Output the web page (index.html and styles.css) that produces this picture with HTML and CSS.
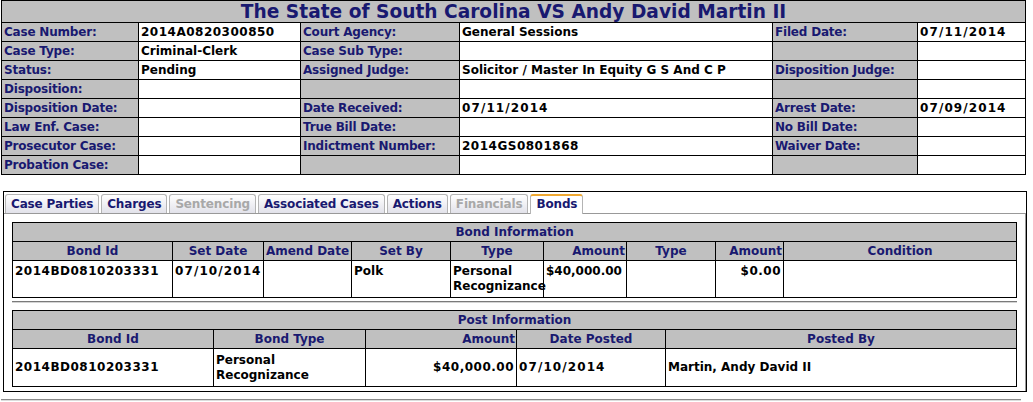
FILE: index.html
```html
<!DOCTYPE html>
<html lang="en">
<head>
<meta charset="UTF-8" />
<title>Case Details</title>
<link rel="stylesheet" href="styles.css">
</head>
<body>

<!-- Case header -->
<table class="case-info">
  <colgroup>
    <col style="width:137px"><col style="width:162px"><col style="width:159px">
    <col style="width:313px"><col style="width:145px"><col style="width:108px">
  </colgroup>
  <tr><th colspan="6" class="case-title">The State of South Carolina VS Andy David Martin II</th></tr>
  <tr>
    <td class="lbl">Case Number:</td><td class="code">2014A0820300850</td>
    <td class="lbl">Court Agency:</td><td>General Sessions</td>
    <td class="lbl">Filed Date:</td><td class="date">07/11/2014</td>
  </tr>
  <tr>
    <td class="lbl">Case Type:</td><td>Criminal-Clerk</td>
    <td class="lbl">Case Sub Type:</td><td></td>
    <td class="lbl"></td><td></td>
  </tr>
  <tr>
    <td class="lbl">Status:</td><td>Pending</td>
    <td class="lbl">Assigned Judge:</td><td>Solicitor / Master In Equity G S And C P</td>
    <td class="lbl">Disposition Judge:</td><td></td>
  </tr>
  <tr>
    <td class="lbl">Disposition:</td><td></td>
    <td class="lbl"></td><td></td>
    <td class="lbl"></td><td></td>
  </tr>
  <tr>
    <td class="lbl">Disposition Date:</td><td></td>
    <td class="lbl">Date Received:</td><td class="date">07/11/2014</td>
    <td class="lbl">Arrest Date:</td><td class="date">07/09/2014</td>
  </tr>
  <tr>
    <td class="lbl">Law Enf. Case:</td><td></td>
    <td class="lbl">True Bill Date:</td><td></td>
    <td class="lbl">No Bill Date:</td><td></td>
  </tr>
  <tr>
    <td class="lbl">Prosecutor Case:</td><td></td>
    <td class="lbl">Indictment Number:</td><td class="code">2014GS0801868</td>
    <td class="lbl">Waiver Date:</td><td></td>
  </tr>
  <tr>
    <td class="lbl">Probation Case:</td><td></td>
    <td class="lbl"></td><td></td>
    <td class="lbl"></td><td></td>
  </tr>
</table>

<!-- Tabs -->
<div class="tab-box">
  <ul class="tabs">
    <li class="tab">Case Parties</li>
    <li class="tab">Charges</li>
    <li class="tab disabled">Sentencing</li>
    <li class="tab">Associated Cases</li>
    <li class="tab">Actions</li>
    <li class="tab disabled">Financials</li>
    <li class="tab active">Bonds</li>
  </ul>

  <div class="tab-panel">
    <table class="grid bond-info">
      <colgroup>
        <col style="width:160px"><col style="width:91px"><col style="width:88px">
        <col style="width:99px"><col style="width:93px"><col style="width:83px">
        <col style="width:89px"><col style="width:68px"><col style="width:233px">
      </colgroup>
      <tr><th colspan="9" class="grid-title">Bond Information</th></tr>
      <tr>
        <th>Bond Id</th><th>Set Date</th><th>Amend Date</th><th>Set By</th><th>Type</th>
        <th class="num">Amount</th><th>Type</th><th class="num">Amount</th><th>Condition</th>
      </tr>
      <tr class="data-top">
        <td class="code">2014BD0810203331</td><td class="date">07/10/2014</td><td></td><td>Polk</td>
        <td>Personal Recognizance</td><td>$40,000.00</td><td></td><td class="num code">$0.00</td><td></td>
      </tr>
    </table>

    <hr class="sep">

    <table class="grid post-info">
      <colgroup>
        <col style="width:201px"><col style="width:152px"><col style="width:151px">
        <col style="width:149px"><col style="width:351px">
      </colgroup>
      <tr><th colspan="5" class="grid-title">Post Information</th></tr>
      <tr>
        <th>Bond Id</th><th>Bond Type</th><th class="num">Amount</th><th>Date Posted</th><th>Posted By</th>
      </tr>
      <tr class="data-mid">
        <td class="code">2014BD0810203331</td><td>Personal Recognizance</td><td class="num code">$40,000.00</td>
        <td class="date">07/10/2014</td><td>Martin, Andy David II</td>
      </tr>
    </table>
  </div>
</div>

<hr class="page-rule">

</body>
</html>
```

FILE: styles.css
```css
body {
  margin: 0;
  padding: 0 0 0 1px;
  font-family: "DejaVu Sans", Verdana, sans-serif;
  font-size: 12px;
  font-weight: bold;
  color: #000;
  background: #fff;
}

/* Numbers and dates print wider in the original */
.code {
  letter-spacing: 0.5px;
}

.date {
  letter-spacing: 1.1px;
}

/* Case header table */
.case-info {
  border-collapse: collapse;
  table-layout: fixed;
  width: 1025px;
  border: 1px solid #000;
}

.case-info td {
  border: 1px solid #000;
  height: 18px;
  padding: 0 2px;
  white-space: nowrap;
  overflow: hidden;
  line-height: 16px;
}

.case-info .lbl {
  background: #c0c0c0;
  color: #191970;
  letter-spacing: -0.2px;
}

.case-title {
  background: #c0c0c0;
  color: #191970;
  font-size: 18.6px;
  height: 21px;
  line-height: 20px;
  padding: 0;
  text-align: center;
  border-bottom: 1px solid #000;
}

/* Tab box */
.tab-box {
  margin: 16px 6px 0 2px;
  border: 1px solid #000;
}

.tabs {
  list-style: none;
  margin: 0;
  padding: 2px 0 0 1px;
  display: flex;
  gap: 2px;
}

.tab {
  color: #191970;
  padding: 0 5px;
  height: 18px;
  line-height: 18px;
  letter-spacing: -0.15px;
  border: 1px solid #b4b4b4;
  border-bottom: none;
  border-radius: 3px 3px 0 0;
  background: linear-gradient(#ffffff, #e2e2ea);
}

.tab.disabled {
  color: #a8a8a8;
}

.tab.active {
  background: #fff;
  border-top: 2px solid #f0a830;
  height: 18px;
  line-height: 17px;
  margin-bottom: -1px;
  position: relative;
  z-index: 1;
}

.tab-panel {
  border-top: 1px solid #999;
  border-right: 1px solid #999;
  padding: 8px 8px 4px 8px;
}

/* Data grids */
.grid {
  border-collapse: collapse;
  table-layout: fixed;
  width: 1005px;
  border: 1px solid #000;
}

.grid th {
  background: #c0c0c0;
  color: #191970;
  border: 1px solid #000;
  height: 18px;
  padding: 0 1px;
  line-height: 16px;
  text-align: center;
  white-space: nowrap;
}

.grid td {
  border: 1px solid #000;
  padding: 1px 2px;
  line-height: 15px;
  text-align: left;
  white-space: nowrap;
}

.grid .num {
  text-align: right;
}

.grid td:nth-child(2),
.bond-info td:nth-child(5) {
  white-space: normal;
}

.data-top td {
  vertical-align: top;
  height: 32px;
  padding-top: 3px;
}

.data-mid td {
  vertical-align: middle;
  height: 35px;
}

.sep {
  margin: 3px 0 7px;
  border: none;
  border-top: 1px solid #7a7a7a;
  border-bottom: 1px solid #d4d4d4;
  height: 0;
}

.page-rule {
  margin: 7px 12px 0 0;
  border: none;
  border-top: 1px solid #8a8a8a;
  border-bottom: 1px solid #dcdcdc;
  height: 0;
}
```
